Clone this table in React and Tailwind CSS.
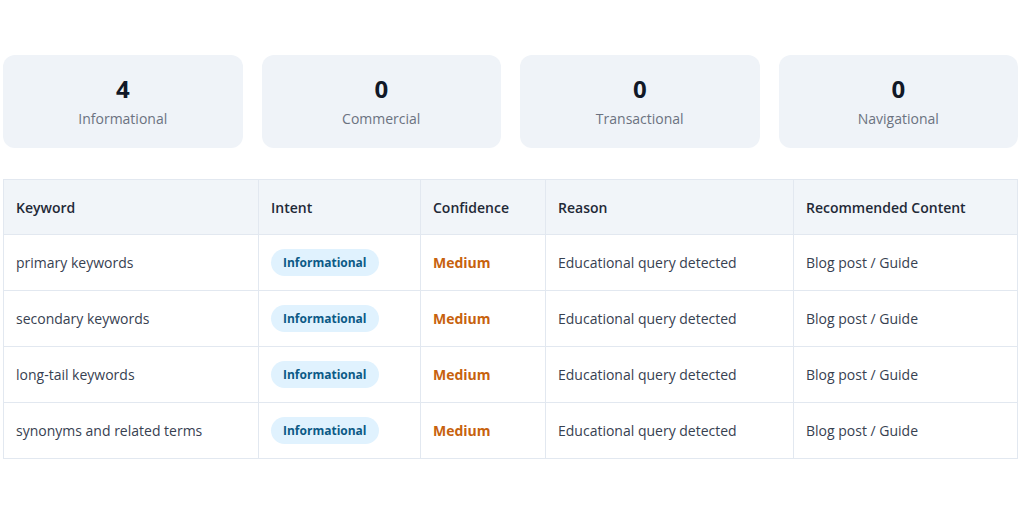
import React from 'react';

const stats = [
  { value: 4, label: 'Informational' },
  { value: 0, label: 'Commercial' },
  { value: 0, label: 'Transactional' },
  { value: 0, label: 'Navigational' },
];

const rows = [
  'primary keywords',
  'secondary keywords',
  'long-tail keywords',
  'synonyms and related terms',
];

const StatCard = ({ value, label }) => (
  <div className="flex h-[93px] flex-col items-center justify-center rounded-xl bg-[#eff3f8]">
    <div className="text-[24px] font-bold leading-none text-[#111827]">{value}</div>
    <div className="mt-[11px] text-[14px] leading-none text-[#6b7280]">{label}</div>
  </div>
);

const App = () => {
  return (
    <div
      className="min-h-[532px] bg-white px-[3px] pt-[55px] text-[#1f2937]"
      style={{ fontFamily: '"Open Sans", "Noto Sans", sans-serif' }}
    >
      <div className="grid w-[1015px] grid-cols-4 gap-[19px]">
        {stats.map((s) => (
          <StatCard key={s.label} {...s} />
        ))}
      </div>

      <table className="mt-[31px] w-[1014px] table-fixed border-collapse border border-[#e2e8f0] text-[14px]">
        <colgroup>
          <col className="w-[255px]" />
          <col className="w-[162px]" />
          <col className="w-[125px]" />
          <col className="w-[248px]" />
          <col className="w-[224px]" />
        </colgroup>
        <thead>
          <tr className="h-[55px] bg-[#f1f5f9] text-left">
            <th className="border border-[#e2e8f0] px-[12px] font-semibold text-[#1f2937]">Keyword</th>
            <th className="border border-[#e2e8f0] px-[12px] font-semibold text-[#1f2937]">Intent</th>
            <th className="border border-[#e2e8f0] px-[12px] font-semibold text-[#1f2937]">Confidence</th>
            <th className="border border-[#e2e8f0] px-[12px] font-semibold text-[#1f2937]">Reason</th>
            <th className="border border-[#e2e8f0] px-[12px] font-semibold text-[#1f2937]">Recommended Content</th>
          </tr>
        </thead>
        <tbody>
          {rows.map((kw) => (
            <tr key={kw} className="h-[56px]">
              <td className="border border-[#e2e8f0] px-[12px] text-[#374151]">{kw}</td>
              <td className="border border-[#e2e8f0] px-[12px]">
                <span className="inline-flex h-[27px] items-center rounded-full bg-[#e0f2fe] px-[12px] text-[12px] font-bold text-[#0c5a86]">
                  Informational
                </span>
              </td>
              <td className="border border-[#e2e8f0] px-[12px] font-bold text-[#c7620e]">Medium</td>
              <td className="border border-[#e2e8f0] px-[12px] text-[#374151]">Educational query detected</td>
              <td className="border border-[#e2e8f0] px-[12px] text-[#374151]">Blog post / Guide</td>
            </tr>
          ))}
        </tbody>
      </table>
    </div>
  );
};

export default App;
